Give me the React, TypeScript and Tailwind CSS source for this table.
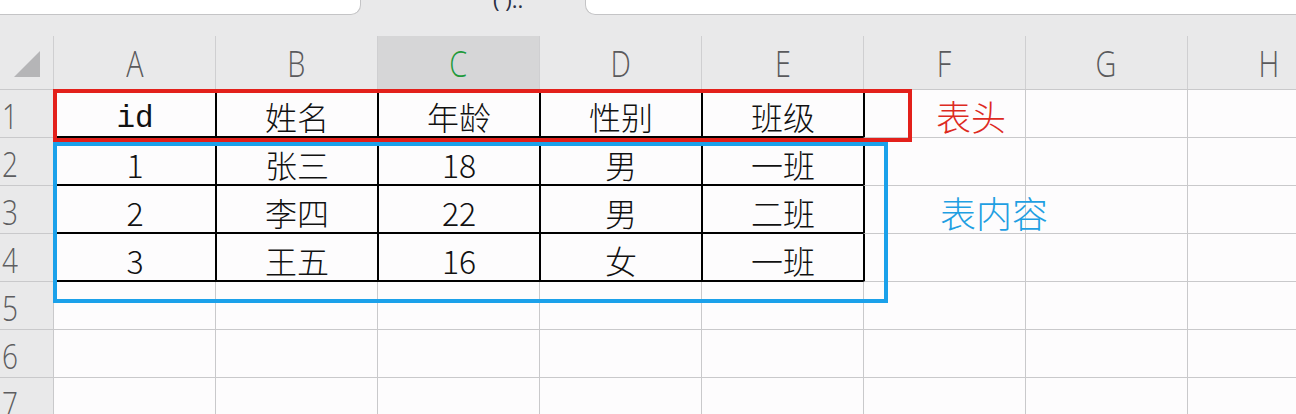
const cols = ["A", "B", "C", "D", "E", "F", "G", "H"];

const table = [
  ["id", "姓名", "年龄", "性别", "班级"],
  ["1", "张三", "18", "男", "一班"],
  ["2", "李四", "22", "男", "二班"],
  ["3", "王五", "16", "女", "一班"],
];

const uiFont = { fontFamily: '"Open Sans", "Noto Sans", sans-serif' };
const monoFont = { fontFamily: '"Liberation Mono", "Noto Sans CJK SC", monospace' };
const cjkFont = { fontFamily: '"Noto Sans CJK SC", "Noto Sans", sans-serif' };

function ColumnHeader({ label, selected }: { label: string; selected: boolean }) {
  return (
    <div
      className={`flex h-full w-[162px] shrink-0 items-center justify-center border-l border-[#cfcfd1] pt-[2px] ${
        selected ? "bg-[#d6d6d7] text-[#1f9a3b]" : "text-[#5a5a5c]"
      }`}
    >
      <span className="inline-block scale-x-[0.8] text-[36px] font-light leading-none" style={uiFont}>
        {label}
      </span>
    </div>
  );
}

function Row({ index }: { index: number }) {
  const data = table[index - 1];
  return (
    <div className="flex h-[48px] shrink-0">
      <div className="flex w-[53px] shrink-0 items-center border-b border-[#c9c9cb] bg-[#e9e9ea] pl-[2px] pt-[4px] text-[#5d5d60]">
        <span className="inline-block origin-left scale-x-[0.8] text-[35px] font-light leading-none" style={uiFont}>
          {index}
        </span>
      </div>
      {cols.map((c, ci) => {
        const inTable = data && ci < 5;
        const rightEdge = data && ci === 5;
        const value = inTable ? data[ci] : "";
        return (
          <div
            key={c}
            className={`flex w-[162px] shrink-0 items-center bg-[#fdfcfd] ${
              inTable
                ? "justify-center border-b-2 border-l-2 border-black pt-[5px]"
                : rightEdge
                ? "border-b border-l-2 border-b-[#c9c9cb] border-l-black"
                : "border-b border-l border-[#c9c9cb]"
            }`}
          >
            {inTable && (
              <span
                className={`leading-none text-[#111] ${
                  value === "id" ? "mt-[5px] text-[31px]" : "text-[32px] font-light"
                }`}
                style={value === "id" ? monoFont : cjkFont}
              >
                {value}
              </span>
            )}
            {ci === 5 && index === 1 && (
              <span
                className="relative z-10 whitespace-nowrap pl-[71px] pt-[3px] text-[35px] font-light leading-none text-[#dd2a1f]"
                style={cjkFont}
              >
                表头
              </span>
            )}
            {ci === 5 && index === 3 && (
              <span
                className="relative z-10 whitespace-nowrap pl-[75px] pt-[4px] text-[36px] font-light leading-none text-[#1f9fe2]"
                style={cjkFont}
              >
                表内容
              </span>
            )}
          </div>
        );
      })}
    </div>
  );
}

export default function App() {
  return (
    <div className="relative flex h-[414px] w-[1296px] flex-col overflow-hidden bg-[#e9e9ea]">
      {/* tab strip */}
      <div className="flex h-[15px] shrink-0">
        <div className="w-[361px] shrink-0 rounded-br-[10px] border-b border-r border-[#c4c4c6] bg-white" />
        <div className="relative w-[224px] shrink-0 overflow-hidden">
          <span className="absolute left-[132px] top-[-17px] text-[22px] text-[#2a2f45]" style={uiFont}>
            ( )..
          </span>
        </div>
        <div className="flex-1 rounded-bl-[10px] border-b border-l border-[#c4c4c6] bg-white" />
      </div>

      <div className="h-[21px] shrink-0" />

      {/* column headers */}
      <div className="flex h-[54px] shrink-0 border-b border-[#c9c9cb]">
        <div className="flex w-[53px] shrink-0 items-end pb-[12px] pl-[14px]">
          <svg width="26" height="26" viewBox="0 0 26 26">
            <polygon points="26,0 26,26 0,26" fill="#b5b5b7" />
          </svg>
        </div>
        {cols.map((c) => (
          <ColumnHeader key={c} label={c} selected={c === "C"} />
        ))}
      </div>

      {[1, 2, 3, 4, 5, 6, 7].map((i) => (
        <Row key={i} index={i} />
      ))}

      {/* highlight boxes */}
      <div className="absolute left-[53px] top-[142px] h-[161px] w-[835px] border-4 border-[#1ba1ea]" />
      <div className="absolute left-[53px] top-[89px] h-[53px] w-[859px] border-4 border-[#e3201b]" />
    </div>
  );
}
